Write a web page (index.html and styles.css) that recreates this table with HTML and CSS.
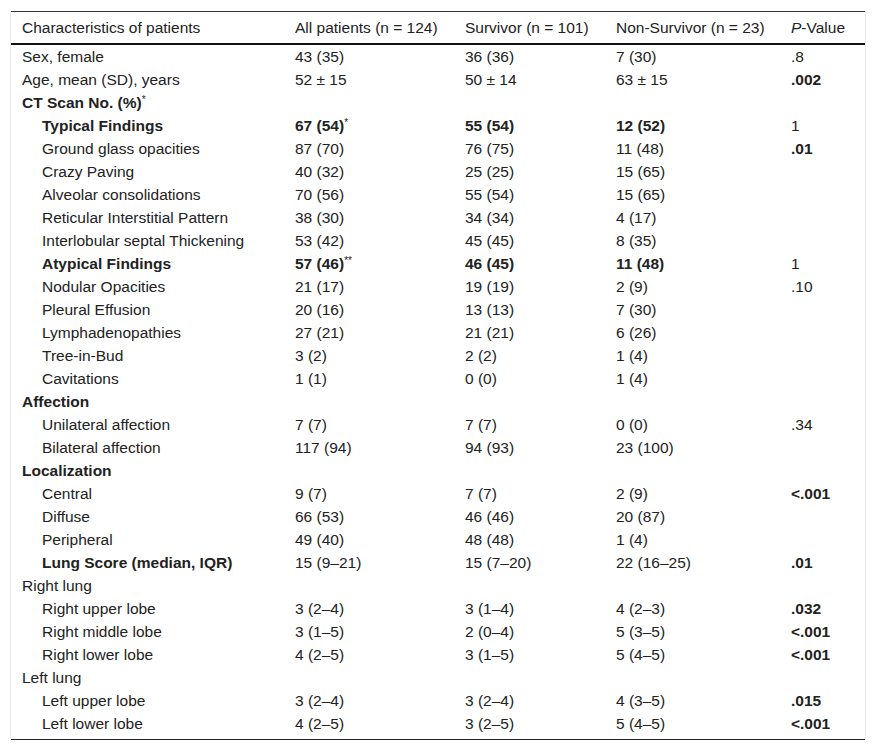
FILE: index.html
```html
<!DOCTYPE html>
<html lang="en">
<head>
<meta charset="utf-8">
<title>Characteristics of patients</title>
<link rel="stylesheet" href="styles.css">
</head>
<body>
<div class="frame">
<table class="data">
<colgroup>
<col class="c1"><col class="c2"><col class="c3"><col class="c4"><col class="c5">
</colgroup>
<thead>
<tr><th>Characteristics of patients</th><th>All patients (n = 124)</th><th>Survivor (n = 101)</th><th>Non-Survivor (n = 23)</th><th><i>P</i>-Value</th></tr>
</thead>
<tbody>
<tr><td>Sex, female</td><td>43 (35)</td><td>36 (36)</td><td>7 (30)</td><td>.8</td></tr>
<tr><td>Age, mean (SD), years</td><td>52 ± 15</td><td>50 ± 14</td><td>63 ± 15</td><td class="b">.002</td></tr>
<tr><td class="b">CT Scan No. (%)<sup>*</sup></td><td></td><td></td><td></td><td></td></tr>
<tr><td class="in b">Typical Findings</td><td class="b">67 (54)<sup>*</sup></td><td class="b">55 (54)</td><td class="b">12 (52)</td><td>1</td></tr>
<tr><td class="in">Ground glass opacities</td><td>87 (70)</td><td>76 (75)</td><td>11 (48)</td><td class="b">.01</td></tr>
<tr><td class="in">Crazy Paving</td><td>40 (32)</td><td>25 (25)</td><td>15 (65)</td><td></td></tr>
<tr><td class="in">Alveolar consolidations</td><td>70 (56)</td><td>55 (54)</td><td>15 (65)</td><td></td></tr>
<tr><td class="in">Reticular Interstitial Pattern</td><td>38 (30)</td><td>34 (34)</td><td>4 (17)</td><td></td></tr>
<tr><td class="in">Interlobular septal Thickening</td><td>53 (42)</td><td>45 (45)</td><td>8 (35)</td><td></td></tr>
<tr><td class="in b">Atypical Findings</td><td class="b">57 (46)<sup>**</sup></td><td class="b">46 (45)</td><td class="b">11 (48)</td><td>1</td></tr>
<tr><td class="in">Nodular Opacities</td><td>21 (17)</td><td>19 (19)</td><td>2 (9)</td><td>.10</td></tr>
<tr><td class="in">Pleural Effusion</td><td>20 (16)</td><td>13 (13)</td><td>7 (30)</td><td></td></tr>
<tr><td class="in">Lymphadenopathies</td><td>27 (21)</td><td>21 (21)</td><td>6 (26)</td><td></td></tr>
<tr><td class="in">Tree-in-Bud</td><td>3 (2)</td><td>2 (2)</td><td>1 (4)</td><td></td></tr>
<tr><td class="in">Cavitations</td><td>1 (1)</td><td>0 (0)</td><td>1 (4)</td><td></td></tr>
<tr><td class="b">Affection</td><td></td><td></td><td></td><td></td></tr>
<tr><td class="in">Unilateral affection</td><td>7 (7)</td><td>7 (7)</td><td>0 (0)</td><td>.34</td></tr>
<tr><td class="in">Bilateral affection</td><td>117 (94)</td><td>94 (93)</td><td>23 (100)</td><td></td></tr>
<tr><td class="b">Localization</td><td></td><td></td><td></td><td></td></tr>
<tr><td class="in">Central</td><td>9 (7)</td><td>7 (7)</td><td>2 (9)</td><td class="b">&lt;.001</td></tr>
<tr><td class="in">Diffuse</td><td>66 (53)</td><td>46 (46)</td><td>20 (87)</td><td></td></tr>
<tr><td class="in">Peripheral</td><td>49 (40)</td><td>48 (48)</td><td>1 (4)</td><td></td></tr>
<tr><td class="in b">Lung Score (median, IQR)</td><td>15 (9–21)</td><td>15 (7–20)</td><td>22 (16–25)</td><td class="b">.01</td></tr>
<tr><td>Right lung</td><td></td><td></td><td></td><td></td></tr>
<tr><td class="in">Right upper lobe</td><td>3 (2–4)</td><td>3 (1–4)</td><td>4 (2–3)</td><td class="b">.032</td></tr>
<tr><td class="in">Right middle lobe</td><td>3 (1–5)</td><td>2 (0–4)</td><td>5 (3–5)</td><td class="b">&lt;.001</td></tr>
<tr><td class="in">Right lower lobe</td><td>4 (2–5)</td><td>3 (1–5)</td><td>5 (4–5)</td><td class="b">&lt;.001</td></tr>
<tr><td>Left lung</td><td></td><td></td><td></td><td></td></tr>
<tr><td class="in">Left upper lobe</td><td>3 (2–4)</td><td>3 (2–4)</td><td>4 (3–5)</td><td class="b">.015</td></tr>
<tr class="last"><td class="in">Left lower lobe</td><td>4 (2–5)</td><td>3 (2–5)</td><td>5 (4–5)</td><td class="b">&lt;.001</td></tr>
</tbody>
</table>
</div>
</body>
</html>
```

FILE: styles.css
```css
html, body {
  margin: 0;
  padding: 0;
  background: #ffffff;
}
body {
  font-family: "Liberation Sans", Arial, sans-serif;
  font-size: 15.5px;
  color: #222222;
}
.frame {
  margin: 11px 0 0 10px;
  width: 854px;
  border-left: 1px solid #ebebeb;
  border-right: 1px solid #ebebeb;
}
.data {
  width: 854px;
  border-collapse: collapse;
  table-layout: fixed;
  border-top: 1px solid #333333;
  border-bottom: 1px solid #222222;
}
.c1 { width: 273px; }
.c2 { width: 170px; }
.c3 { width: 151px; }
.c4 { width: 175px; }
.c5 { width: 85px; }
.data th {
  font-weight: normal;
  text-align: left;
  padding: 7px 0 7px 11px;
  line-height: 17px;
  border-bottom: 2px solid #111111;
  white-space: nowrap;
}
.data td {
  padding: 3px 0 3px 11px;
  line-height: 17px;
  white-space: nowrap;
  text-align: left;
}
.data td.in {
  padding-left: 31px;
}
.data .b {
  font-weight: bold;
}
.data sup {
  font-size: 10px;
  font-weight: normal;
  line-height: 0;
  vertical-align: 5px;
}
.data tr.last td {
  padding-bottom: 7px;
}
```
